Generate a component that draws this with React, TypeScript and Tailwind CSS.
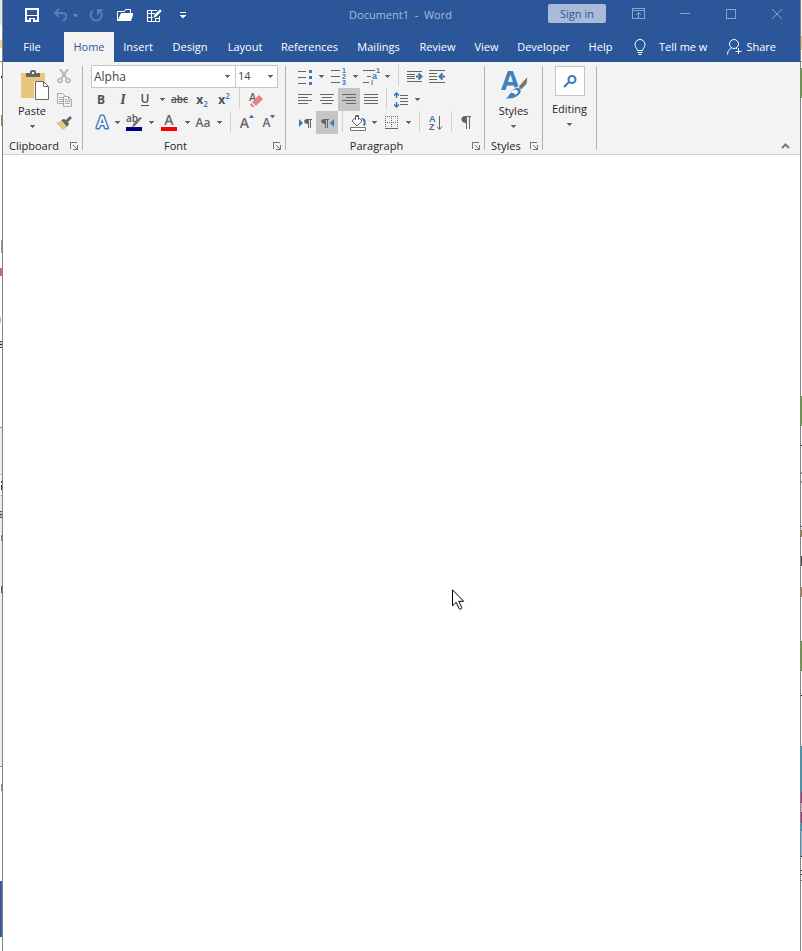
import type { ReactNode } from "react";

const tabs = [
  { name: "Home", className: "w-[50px] bg-[#f3f3f3] text-[#2b579a]" },
  { name: "Insert", className: "w-12" },
  { name: "Design", className: "w-14" },
  { name: "Layout", className: "w-[54px]" },
  { name: "References", className: "w-[75px]" },
  { name: "Mailings", className: "w-[63px]" },
  { name: "Review", className: "w-[55px]" },
  { name: "View", className: "w-[43px]" },
  { name: "Developer", className: "w-[71px]" },
  { name: "Help", className: "w-[43px]" },
];

// slices of the windows behind, top to bottom
const leftEdge = [
  "h-[25px] bg-[#e6e6e6]",
  "h-[15px] bg-white",
  "h-2 bg-[#f3d3a3]",
  "h-[13px] bg-white",
  "h-px bg-[#8a8a8a]",
  "h-[14px] bg-white",
  "ml-px h-[2px] bg-[#3a2020]",
  "h-[37px] bg-white",
  "ml-px h-[11px] bg-[#a07c50]",
  "h-[114px] bg-white",
  "ml-px h-[13px] bg-[#a0958a]",
  "h-[15px] bg-white",
  "h-2 bg-[#c0705a]",
  "h-[41px] bg-white",
  "mr-px h-[6px] bg-[#7ccbf5]",
  "h-[18px] bg-white",
  "h-px bg-[#404a70]",
  "h-[2px] bg-[#c8d0e8]",
  "h-px bg-[#202a50]",
  "h-[2px] bg-[#e8d0b8]",
  "h-px bg-[#404a70]",
  "h-[79px] bg-white",
  "h-px bg-[#8a8a8a]",
  "h-[46px] bg-[#ececec]",
  "h-px bg-[#a5cdea]",
  "h-[6px] bg-[#f5f5f5]",
  "ml-px h-[2px] bg-[#503010]",
  "h-[2px] bg-[#f5f5f5]",
  "ml-px h-[5px] bg-[#503010]",
  "h-[5px] bg-[#f5f5f5]",
  "h-px bg-[#a5cdea]",
  "h-[15px] bg-[#ececec]",
  "h-px bg-[#70506a]",
  "h-[2px] bg-[#d8c8b0]",
  "h-px bg-[#403050]",
  "h-[2px] bg-[#c8b0b0]",
  "h-px bg-[#70506a]",
  "h-[17px] bg-[#ececec]",
  "ml-px h-[6px] bg-[#907030]",
  "h-[45px] bg-[#ececec]",
  "ml-px h-[7px] bg-[#605040]",
  "h-[173px] bg-[#ececec]",
  "h-px bg-[#8a8a8a]",
  "h-[17px] bg-white",
  "ml-px h-[7px] bg-[#b08050]",
  "h-[90px] bg-white",
  "h-14 bg-[#3a5a9b]",
];

const rightEdge = [
  "h-9 bg-[#f3f3f3]",
  "h-[14px] bg-[#e8c88a]",
  "h-[11px] bg-white",
  "h-px bg-[#8a8a8a]",
  "h-[6px] bg-white",
  "h-[30px] bg-[#60a030]",
  "h-[298px] bg-white",
  "h-[30px] bg-[#60a030]",
  "h-[19px] bg-white",
  "h-px bg-black",
  "h-[26px] bg-white",
  "h-[2px] bg-[#8a8a8a]",
  "h-[7px] bg-white",
  "h-[2px] bg-[#8a8a8a]",
  "h-[43px] bg-white",
  "h-px bg-[#202060]",
  "h-[3px] bg-white",
  "h-[7px] bg-[#a07840]",
  "h-[19px] bg-white",
  "h-[10px] bg-[#504050]",
  "h-[21px] bg-white",
  "h-[10px] bg-[#b08850]",
  "h-11 bg-white",
  "h-[30px] bg-[#60a030]",
  "h-6 bg-white",
  "h-px bg-black",
  "h-[50px] bg-white",
  "h-[46px] bg-[#20a0cc]",
  "h-[11px] bg-[#a83080]",
  "h-[9px] bg-[#dcb4d0]",
  "h-[11px] bg-[#a83080]",
  "h-2 bg-[#20a0cc]",
  "h-[25px] bg-[#78c0e8]",
  "h-px bg-black",
  "h-[13px] bg-white",
  "h-px bg-black",
  "h-[3px] bg-white",
  "h-px bg-black",
  "h-[5px] bg-white",
  "h-px bg-[#707070]",
];

const Edge = ({ parts, className }: { parts: string[]; className: string }) => (
  <div className={`shrink-0 ${className}`}>
    {parts.map((part, i) => (
      <div key={i} className={part} />
    ))}
  </div>
);

const Caret = () => (
  <svg width="5" height="3" viewBox="0 0 5 3" fill="#666" shapeRendering="crispEdges">
    <path d="M0 0h5v1H0zM1 1h3v1H1zM2 2h1v1H2z" />
  </svg>
);

const Tool = ({ label, className = "w-[22px]", children }: { label: string; className?: string; children: ReactNode }) => (
  <button aria-label={label} className={`flex h-[23px] shrink-0 items-center justify-center ${className}`}>
    {children}
  </button>
);

const Drop = ({ label }: { label: string }) => (
  <Tool label={`${label} options`} className="w-[10px]">
    <Caret />
  </Tool>
);

const Split = ({ className }: { className: string }) => (
  <div className={`flex h-[23px] shrink-0 justify-center ${className}`}>
    <div className="h-[21px] w-px bg-[#d0d0d0]" />
  </div>
);

const Divider = () => <div className="my-1 w-px shrink-0 bg-[#b1b1b1]" />;

const Launcher = ({ label }: { label: string }) => (
  <button aria-label={label} className="absolute right-1 bottom-1">
    <svg width="8" height="8" viewBox="0 0 8 8" fill="#777" shapeRendering="crispEdges">
      <path d="M0 0h7v1H1v6H0zM3 3h1v1H3zM4 4h1v1H4zM5 5h1v1H5zM7 3h1v5H3V7h3V6h1z" />
    </svg>
  </button>
);

const Group = ({ title, className, labelClass = "text-center", launcher = true, children }: {
  title: string;
  className: string;
  labelClass?: string;
  launcher?: boolean;
  children: ReactNode;
}) => (
  <section aria-label={title} className={`relative shrink-0 pt-[3px] ${className}`}>
    <div className="h-[69px]">{children}</div>
    {launcher && <div className={`pt-1 text-[11px] leading-4 ${labelClass}`}>{title}</div>}
    {launcher && <Launcher label={`${title} settings`} />}
  </section>
);

const Lines = ({ rows }: { rows: number[][] }) => (
  <svg width="14" height="11" viewBox="0 0 14 11" fill="#666" shapeRendering="crispEdges">
    {rows.map(([x, w], i) => (
      <rect key={i} x={x} y={i * 3} width={w} height="1" />
    ))}
  </svg>
);

const TitleBar = () => (
  <header className="flex h-8 items-start text-white">
    <div className="flex h-[30px] flex-1 items-center pl-[22px]">
      <button aria-label="Save" className="w-[14px]">
        <svg width="14" height="14" viewBox="0 0 14 14" fill="none" stroke="#fff" shapeRendering="crispEdges">
          <path d="M1 1h12v12H1z" strokeWidth="2" />
          <path d="M2 7h10v1H2zM4 10h6v3H4z" fill="#fff" stroke="none" />
          <path d="M6 11h2v3H6z" fill="#2b579a" stroke="none" />
        </svg>
      </button>
      <button aria-label="Undo" className="ml-[14px] w-4">
        <svg width="15" height="14" viewBox="0 0 15 14" fill="none" stroke="#5a7db3" strokeWidth="2">
          <path d="M6 1 2 5l4 4M2 5h7c6 0 5 6 1 8" />
        </svg>
      </button>
      <button aria-label="Undo list" className="ml-1 w-[6px] opacity-30">
        <svg width="5" height="3" viewBox="0 0 5 3" fill="#fff"><path d="M0 0h5L3 3H2z" /></svg>
      </button>
      <button aria-label="Repeat" className="ml-[10px] w-[14px]">
        <svg width="14" height="14" viewBox="0 0 14 14" fill="none" stroke="#5a7db3" strokeWidth="2">
          <path d="M4 2.500a5.500 5.500 0 1 0 5.500-.5M9 7V2h5" />
        </svg>
      </button>
      <button aria-label="Open" className="ml-[14px] w-4">
        <svg width="16" height="14" viewBox="0 0 16 14">
          <path d="M.5 13V3.500h7l1-2h5V5" fill="none" stroke="#fff" />
          <path d="M4 5h12v2l-2 6H.5z" fill="#fff" />
        </svg>
      </button>
      <button aria-label="Edit table" className="ml-[14px] w-4">
        <svg width="16" height="15" viewBox="0 0 16 15" fill="none" stroke="#fff">
          <path d="M10 2.500H.5v11h12V8M.5 5.500h7M4.500 3v10M.5 9.500h5M8.500 11v3M8 10.500h4" shapeRendering="crispEdges" />
          <path d="m6 10 1-3 6-6 2 2-6 6z" fill="#fff" stroke="#2b579a" strokeWidth=".5" />
        </svg>
      </button>
      <button aria-label="Customize toolbar" className="ml-[17px] w-2">
        <svg width="6" height="6" viewBox="0 0 6 6" fill="#fff" shapeRendering="crispEdges">
          <path d="M0 0h6v1H0zM0 3h6v1H5v1H4v1H2V5H1V4H0z" />
        </svg>
      </button>
    </div>
    <h1 className="h-[30px] pr-6 text-[11px] leading-[30px] whitespace-pre text-[#a9bbd8]">Document1  -  Word</h1>
    <div className="flex h-[27px] flex-1 items-center justify-end text-[#8ba3cb]">
      <button className="h-[19px] w-[58px] rounded-xs bg-[#aabbd7] text-[11px] leading-[19px] text-[#2b579a]">Sign in</button>
      <button aria-label="Ribbon display" className="ml-[26px] w-[13px]">
        <svg width="13" height="11" viewBox="0 0 13 11" fill="none" stroke="currentColor" shapeRendering="crispEdges">
          <path d="M.5.5h12v10H.5zM1 2.500h11M6.500 4v6M4 6.500h1M8 6.500h1M5 5.500h3" />
        </svg>
      </button>
      <button aria-label="Minimize" className="ml-[35px] h-4 w-[10px]">
        <span className="block h-px bg-current" />
      </button>
      <button aria-label="Maximize" className="ml-9 size-[10px] border border-current" />
      <button aria-label="Close" className="mr-[18px] ml-9 w-[10px]">
        <svg width="10" height="10" viewBox="0 0 10 10" stroke="currentColor"><path d="m0 0 10 10M10 0 0 10" /></svg>
      </button>
    </div>
  </header>
);

const TabBar = () => (
  <nav className="flex h-[30px] items-stretch text-[11px] text-white">
    <button className="mr-[3px] w-[58px]">File</button>
    {tabs.map((tab) => (
      <button key={tab.name} className={`shrink-0 ${tab.className}`}>
        {tab.name}
      </button>
    ))}
    <button className="ml-3 flex items-center">
      <svg width="12" height="17" viewBox="0 0 12 17" fill="none" stroke="#fff">
        <path d="M3.500 11.500c0-2-2.500-3-2.500-6a5 5 0 0 1 10 0c0 3-2.500 4-2.500 6zM3.500 13.500h5M4.500 15.500h3" />
      </svg>
      <span className="ml-[13px] w-[49px] text-left whitespace-nowrap">Tell me w</span>
    </button>
    <button className="mr-6 ml-auto flex items-center gap-1">
      <svg width="15" height="16" viewBox="0 0 15 16" fill="none" stroke="#fff">
        <circle cx="7" cy="5" r="4.500" />
        <path d="M.5 15.500c0-4 2-5 4-6.500M9 9l1 1M11.500 9v6M8.500 12.500h6" />
      </svg>
      Share
    </button>
  </nav>
);

const Clipboard = () => (
  <Group title="Clipboard" className="w-[79px]" labelClass="pl-[6px]">
    <div className="flex pl-[13px]">
      <button className="flex w-8 flex-col items-center pt-[5px] text-[11px]">
        <svg className="ml-[3px]" width="30" height="31" viewBox="0 0 30 31">
          <path d="M2 3h24v25H2z" fill="#eac57c" />
          <path d="M7 3h4V1l2-1h2l2 1v2h4v4H7z" fill="#666" />
          <path d="M13 2h2v2h-2z" fill="#f3f3f3" />
          <path d="M15 11h10l5 5v15H15z" fill="#f3f3f3" />
          <path d="M16.500 11.500h8l5 5v13h-13z" fill="#fff" stroke="#666" />
          <path d="M24.500 12v4.500H29" fill="none" stroke="#666" />
        </svg>
        <span className="mt-px leading-[18px]">Paste</span>
        <span className="mt-[5px]"><Caret /></span>
      </button>
      <div className="ml-2">
        <Tool label="Cut" className="w-4">
          <svg width="14" height="15" viewBox="0 0 14 15" fill="none" stroke="#b3b3b3" strokeWidth="2">
            <path d="m3 0 7 10M11 0 4 10" />
            <circle cx="3" cy="11.500" r="2" strokeWidth="1.500" />
            <circle cx="11" cy="11.500" r="2" strokeWidth="1.500" />
          </svg>
        </Tool>
        <Tool label="Copy" className="w-4">
          <svg width="15" height="14" viewBox="0 0 15 14" fill="#f3f3f3" stroke="#aaa">
            <path d="M.5.5h5l3 3v7h-8zM2 4.500h4M2 6.500h4M2 8.500h4" />
            <path d="M6.500 3.500h5l3 3v7h-8zM11.500 4v3H14M8 8.500h5M8 10.500h5M8 6.500h2" />
          </svg>
        </Tool>
        <Tool label="Format Painter" className="w-4">
          <svg width="16" height="14" viewBox="0 0 16 14">
            <path d="m5 5 6 6-4 3-7-7z" fill="#eac57c" />
            <path d="m5 4 3-1 2 1 4-4 2 2-4 4 1 2-2 3z" fill="#666" />
          </svg>
        </Tool>
      </div>
    </div>
  </Group>
);

const FontGroup = () => (
  <Group title="Font" className="w-[202px] pl-[7px]" labelClass="pr-6 text-center">
    <div className="ml-px flex h-[23px] text-[11px]">
      <div className="flex w-[145px] items-center border border-[#c6c6c6] bg-white pr-[5px]">
        <input aria-label="Font name" defaultValue="Alpha" className="w-full min-w-0 flex-1 bg-transparent pl-[2px] text-[12px] text-[#444] outline-none" />
        <Caret />
      </div>
      <div className="-ml-px flex w-[43px] items-center border border-[#c6c6c6] bg-white pr-1">
        <input aria-label="Font size" defaultValue="14" className="w-full min-w-0 flex-1 bg-transparent pl-[2px] text-[#444] outline-none" />
        <Caret />
      </div>
    </div>
    <div className="flex text-[12px] text-[#505050]">
      <Tool label="Bold"><b>B</b></Tool>
      <Tool label="Italic"><i className="font-['Liberation_Serif',serif] text-[14px] font-bold">I</i></Tool>
      <Tool label="Underline"><span className="border-b border-[#505050] leading-3 font-semibold">U</span></Tool>
      <Tool label="Underline options" className="w-3"><Caret /></Tool>
      <Tool label="Strikethrough" className="w-[23px]"><span className="text-[10px] font-semibold line-through">abc</span></Tool>
      <Tool label="Subscript">
        <b>x</b><span className="mt-2 text-[8px] font-semibold text-[#3c78b4]">2</span>
      </Tool>
      <Tool label="Superscript">
        <b>x</b><span className="mb-2 text-[8px] font-semibold text-[#3c78b4]">2</span>
      </Tool>
      <Split className="w-[9px]" />
      <Tool label="Clear Formatting" className="w-6">
        <svg className="overflow-visible" width="16" height="16" viewBox="0 0 16 16">
          <text x="1" y="9" fontSize="11" fontWeight="600" fill="#666">A</text>
          <path d="m11 3 4 4-7 7-4-4z" fill="#e8808c" />
          <path d="m3 11 4 4H4l-2-2z" fill="#e8808c" />
        </svg>
      </Tool>
    </div>
    <div className="flex text-[#666]">
      <Tool label="Text Effects">
        <svg className="overflow-visible" width="14" height="15" viewBox="0 0 14 15">
          <text x="8" y="13" textAnchor="middle" fontSize="16" fontWeight="600" fill="#fff" stroke="#4080bc" strokeWidth="3" paintOrder="stroke" strokeLinejoin="round">A</text>
        </svg>
      </Tool>
      <Drop label="Text Effects" />
      <Tool label="Highlight Color" className="w-6">
        <svg className="overflow-visible" width="17" height="17" viewBox="0 0 17 17">
          <text x="0" y="8" fontSize="10" fontWeight="600" fill="#555">ab</text>
          <path d="m7 10 7-7 2 1-7 8-3 1z" fill="#777" />
          <path d="M0 13h16v4H0z" fill="#000080" />
        </svg>
      </Tool>
      <Drop label="Highlight" />
      <Tool label="Font Color" className="w-[26px]">
        <svg className="overflow-visible" width="16" height="17" viewBox="0 0 16 17">
          <text x="8" y="11" textAnchor="middle" fontSize="14" fontWeight="600" fill="#666">A</text>
          <path d="M0 13h16v4H0z" fill="#f00" />
        </svg>
      </Tool>
      <Drop label="Font Color" />
      <Tool label="Change Case" className="w-[22px]"><span className="text-[12px] font-semibold">Aa</span></Tool>
      <Drop label="Change Case" />
      <Split className="w-3" />
      <Tool label="Grow Font">
        <span className="text-[14px] font-semibold">A</span>
        <svg className="mb-3" width="5" height="3" viewBox="0 0 5 3" fill="#3c78b4"><path d="M0 3h5L3 0H2z" /></svg>
      </Tool>
      <Tool label="Shrink Font">
        <span className="text-[12px] font-semibold">A</span>
        <svg className="mb-3" width="5" height="3" viewBox="0 0 5 3" fill="#3c78b4"><path d="M0 0h5L3 3H2z" /></svg>
      </Tool>
    </div>
  </Group>
);

const Paragraph = () => (
  <Group title="Paragraph" className="w-[198px] pl-2" labelClass="pr-[25px] text-center">
    <div className="flex">
      <Tool label="Bullets">
        <svg width="15" height="16" viewBox="0 0 15 16">
          <path d="M0 2h8v1H0zM0 8h8v1H0zM0 14h8v1H0z" fill="#666" />
          <path d="M11 1h3v3h-3zM11 7h3v3h-3zM11 13h3v3h-3z" fill="#3c78b4" />
        </svg>
      </Tool>
      <Drop label="Bullets" />
      <Tool label="Numbering" className="w-6">
        <svg className="overflow-visible" width="15" height="17" viewBox="0 0 15 17">
          <path d="M0 2h9v1H0zM0 8h9v1H0zM0 14h9v1H0z" fill="#666" />
          <g className="font-['Liberation_Sans',sans-serif]" fontSize="7" fontWeight="700" fill="#3c78b4">
            <text x="11" y="5">1</text>
            <text x="11" y="11">2</text>
            <text x="11" y="17">3</text>
          </g>
        </svg>
      </Tool>
      <Drop label="Numbering" />
      <Tool label="Multilevel List">
        <svg className="overflow-visible" width="17" height="17" viewBox="0 0 17 17">
          <path d="M0 2h12v1H0zM4 8h4v1H4zM0 14h6v1H0z" fill="#666" />
          <g className="font-['Liberation_Sans',sans-serif]" fontWeight="700" fill="#3c78b4">
            <text x="13" y="5" fontSize="7">1</text>
            <text x="9" y="11" fontSize="9">a</text>
            <text x="8" y="17" fontSize="7">i</text>
          </g>
        </svg>
      </Tool>
      <Drop label="Multilevel List" />
      <Split className="w-3" />
      <Tool label="Increase Indent">
        <svg width="16" height="13" viewBox="0 0 16 13">
          <path d="M0 1h15v1H0zM0 4h8v1H0zM0 6h8v1H0zM0 8h8v1H0zM0 11h15v1H0z" fill="#666" />
          <path d="M9 6.500h5M11.500 3.500l3 3-3 3" fill="none" stroke="#3c78b4" strokeWidth="2" />
        </svg>
      </Tool>
      <Tool label="Decrease Indent">
        <svg width="16" height="13" viewBox="0 0 16 13">
          <path d="M0 0h16v1H0zM0 3h8v1H0zM0 6h8v1H0zM0 9h8v1H0zM0 12h16v1H0z" fill="#666" />
          <path d="M16 6.500h-5M13.500 3.500l-3 3 3 3" fill="none" stroke="#3c78b4" strokeWidth="2" />
        </svg>
      </Tool>
    </div>
    <div className="flex">
      <Tool label="Align Left"><Lines rows={[[0, 14], [0, 10], [0, 14], [0, 10]]} /></Tool>
      <Tool label="Center"><Lines rows={[[0, 14], [2, 10], [0, 14], [2, 10]]} /></Tool>
      <Tool label="Align Right" className="w-[22px] bg-[#c5c5c5]"><Lines rows={[[0, 14], [4, 10], [0, 14], [4, 10]]} /></Tool>
      <Tool label="Justify"><Lines rows={[[0, 14], [0, 14], [0, 14], [0, 14]]} /></Tool>
      <Split className="w-2" />
      <Tool label="Line Spacing">
        <svg width="14" height="16" viewBox="0 0 14 16">
          <path d="M6 3h8v1H6zM6 6h8v1H6zM6 9h8v1H6zM6 12h8v1H6z" fill="#666" />
          <path d="M2.500 1v5M2.500 10v5M0 3.500 2.500 1 5 3.500M0 12.500 2.500 15 5 12.500" fill="none" stroke="#3c78b4" strokeWidth="1.500" />
        </svg>
      </Tool>
      <Drop label="Line Spacing" />
    </div>
    <div className="flex">
      <Tool label="Left-to-Right">
        <svg width="13" height="10" viewBox="0 0 13 10">
          <path d="M0 1v8l4-4z" fill="#3c78b4" />
          <path d="M8 1h5v1h-1v8h-1V2h-1v8H9V6C4 6 4 1 8 1z" fill="#666" />
        </svg>
      </Tool>
      <Tool label="Right-to-Left" className="w-[22px] bg-[#c5c5c5]">
        <svg width="13" height="10" viewBox="0 0 13 10">
          <path d="M13 1v8L9 5z" fill="#3c78b4" />
          <path d="M3 1h5v1H7v8H6V2H5v8H4V6C-1 6-1 1 3 1z" fill="#666" />
        </svg>
      </Tool>
      <Split className="w-[9px]" />
      <Tool label="Shading">
        <svg width="17" height="17" viewBox="0 0 17 17">
          <path d="M.5 13.500h15v3H.5z" fill="#fff" stroke="#777" />
          <path d="m7 2 5 5-5 5-5-5zM5.500 6V1.500h3V6" fill="#fff" stroke="#666" />
          <path d="M11 4c4 0 6 2 4 8l-2-1 1-3z" fill="#3c78b4" />
        </svg>
      </Tool>
      <Drop label="Shading" />
      <Tool label="Borders" className="w-6">
        <svg width="13" height="13" viewBox="0 0 13 13" fill="none" stroke="#666" shapeRendering="crispEdges">
          <path d="M0 .5h13M0 6.500h13M.5 0v12M6.500 0v12M12.500 0v12" strokeDasharray="1 1" />
          <path d="M0 12.500h13" />
        </svg>
      </Tool>
      <Drop label="Borders" />
      <Split className="w-3" />
      <Tool label="Sort">
        <svg className="overflow-visible" width="14" height="16" viewBox="0 0 14 16">
          <g className="font-['Liberation_Sans',sans-serif]" fontSize="9" fontWeight="700">
            <text x="0" y="7" fill="#3c78b4">A</text>
            <text x="0" y="15" fill="#8a4ea0">Z</text>
          </g>
          <path d="M10.500 1v13M8 11.500l2.500 3 2.500-3" fill="none" stroke="#666" />
        </svg>
      </Tool>
      <Split className="w-2" />
      <Tool label="Show Marks">
        <svg width="10" height="13" viewBox="0 0 10 13" fill="#666">
          <path d="M4 0h6v1H9v12H8V1H6v12H5V7C-1 7-1 0 4 0z" />
        </svg>
      </Tool>
    </div>
  </Group>
);

const Styles = () => (
  <Group title="Styles" className="w-[57px]" labelClass="pl-[6px]">
    <button className="flex w-full flex-col items-center pt-[5px] text-[11px]">
      <svg className="overflow-visible" width="28" height="31" viewBox="0 0 28 31">
        <text x="1" y="20" fontSize="27" fontWeight="700" fill="#4080bc">A</text>
        <path d="m28 6-1 8-7 7-3-3 8-9z" fill="#777" stroke="#f3f3f3" />
        <path d="M18 17c4 2 4 5 1 8-4 4-9 4-14 4 4-2 5-10 13-12z" fill="#4080bc" stroke="#f3f3f3" />
        <path d="M11 23c1-3 4-4 6-3 2 2 0 4-2 5l-1-2z" fill="#fff" />
      </svg>
      <span className="mt-px leading-[18px]">Styles</span>
      <span className="mt-[5px]"><Caret /></span>
    </button>
  </Group>
);

const Editing = () => (
  <Group title="Editing" className="w-[53px]" launcher={false}>
    <button className="flex w-full flex-col items-center pt-px text-[11px]">
      <span className="flex size-[30px] items-center justify-center border border-[#c6c6c6] bg-white">
        <svg width="14" height="13" viewBox="0 0 14 13" fill="none" stroke="#3c78b4" strokeWidth="2">
          <circle cx="9" cy="4.500" r="3.500" />
          <path d="m6 7-5 5" />
        </svg>
      </span>
      <span className="mt-1 leading-[18px]">Editing</span>
      <span className="mt-[5px]"><Caret /></span>
    </button>
  </Group>
);

const App = () => {
  return (
    <div className="flex min-h-screen bg-white font-['Open_Sans','Noto_Sans',sans-serif] text-[#262626]">
      <Edge parts={leftEdge} className="w-[2px]" />
      <div className="relative flex min-w-0 flex-1 flex-col border-x border-[#838383]">
        <div className="bg-[#2b579a]">
          <TitleBar />
          <TabBar />
        </div>
        <div className="flex h-[93px] border-b border-[#d0d0d0] bg-[#f3f3f3]">
          <Clipboard />
          <Divider />
          <FontGroup />
          <Divider />
          <Paragraph />
          <Divider />
          <Styles />
          <Divider />
          <Editing />
          <Divider />
          <button aria-label="Collapse ribbon" className="mt-auto mr-[10px] mb-[5px] ml-auto">
            <svg width="9" height="6" viewBox="0 0 9 6" fill="none" stroke="#777" strokeWidth="2">
              <path d="m1 5 3.500-3.500L8 5" />
            </svg>
          </button>
        </div>
        <main className="flex-1 bg-white" />
        <svg className="absolute top-[589px] left-[449px]" width="13" height="22" viewBox="0 0 13 22">
          <path d="M.5.8v16l3.700-3.500 3 6.500c1 1 3 0 2.500-1.500l-3-6h5z" fill="#fff" stroke="#000" />
        </svg>
      </div>
      <Edge parts={rightEdge} className="w-px" />
    </div>
  );
};

export default App;
